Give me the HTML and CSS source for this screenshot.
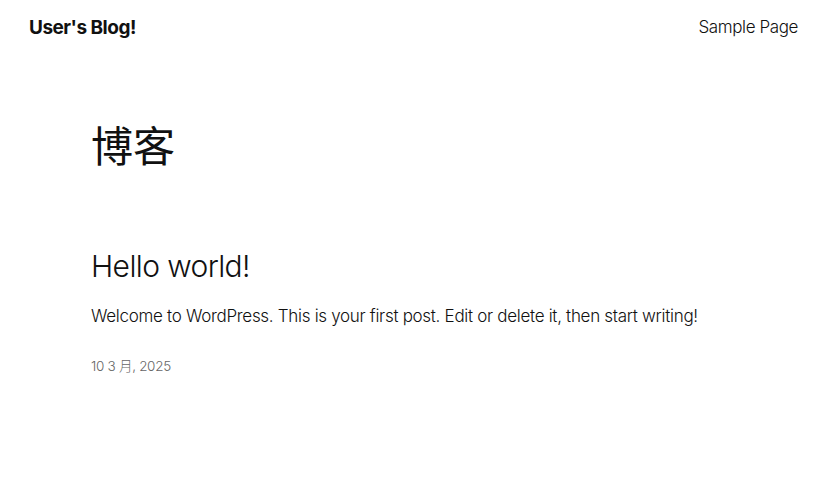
FILE: index.html
```html
<!DOCTYPE html>
<html lang="zh-CN">
<head>
  <meta charset="UTF-8">
  <title>博客 – User's Blog!</title>
  <meta name="viewport" content="width=device-width, initial-scale=1.0">
  <link rel="stylesheet" href="styles.css">
</head>
<body>
  <header class="site-header">
    <a href="#" class="site-title">User's Blog!</a>
    <nav class="site-nav">
      <a href="#">Sample Page</a>
    </nav>
  </header>

  <main class="content">
    <h1 class="page-title">博客</h1>

    <article class="post">
      <h2 class="post-title"><a href="#">Hello world!</a></h2>
      <p class="post-excerpt">Welcome to WordPress. This is your first post. Edit or delete it, then start writing!</p>
      <time class="post-date" datetime="2025-03-10">10 3 月, 2025</time>
    </article>
  </main>
</body>
</html>
```

FILE: styles.css
```css
body {
  margin: 0;
  font-family: Inter, "Noto Sans CJK SC", sans-serif;
  font-weight: 300;
  color: #111;
  background: #fff;
}

a {
  color: inherit;
  text-decoration: none;
}

.site-header {
  display: flex;
  align-items: center;
  justify-content: space-between;
  height: 54px;
  padding: 0 41px 0 29px;
}

.site-title {
  font-size: 19px;
  font-weight: 700;
  letter-spacing: -0.5px;
}

.site-nav a {
  font-size: 17px;
  letter-spacing: -0.4px;
}

.content {
  padding: 0 91px;
}

.page-title {
  margin: 68px 0 0;
  font-size: 42px;
  font-weight: 400;
  line-height: 1.2;
}

.post {
  margin-top: 76px;
}

.post-title {
  margin: 0;
  font-size: 30px;
  font-weight: 300;
  letter-spacing: -0.6px;
  line-height: 1.2;
}

.post-excerpt {
  margin: 20px 0 0;
  font-size: 17px;
  letter-spacing: -0.3px;
  line-height: 1.5;
}

.post-date {
  display: block;
  margin-top: 25px;
  font-size: 13.5px;
  color: #666;
  letter-spacing: -0.3px;
}
```
